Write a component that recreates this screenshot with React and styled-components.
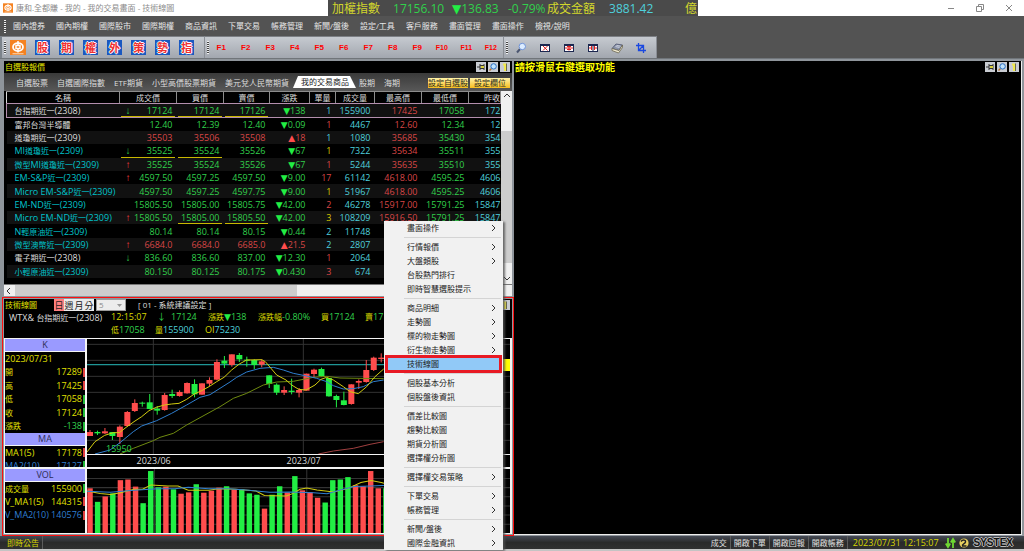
import React from "react";
import styled, { createGlobalStyle, css } from "styled-components";

const c = {
  green: "#31d04c",
  red: "#d84646",
  cyan: "#4fd0dc",
  name: "#00c4cc",
  white: "#dcdcdc",
  yellow: "#d8d800",
  blue: "#2f7fd0",
  up: "#ff4d4d",
  down: "#22ee44",
};

const Global = createGlobalStyle`
  * { box-sizing: border-box; }
  body {
    margin: 0;
    background: #535353;
    font-family: "Open Sans", "Noto Sans CJK TC", sans-serif;
    font-size: 8px;
    line-height: 12px;
    color: #dcdcdc;
  }
  button, select {
    font: inherit;
    color: inherit;
    margin: 0;
    padding: 0;
    border: 0;
    background: none;
    white-space: nowrap;
  }
`;

const Page = styled.div`
  position: relative;
  display: flex;
  flex-direction: column;
  min-height: 100vh;
  overflow: hidden;
`;

/* ---------- window title ---------- */
const TitleBar = styled.header`
  display: grid;
  grid-template-columns: 328px auto 1fr;
  height: 16px;
  background: #fff;
`;
const WindowTitle = styled.h1`
  display: flex;
  align-items: center;
  gap: 3px;
  margin: 0;
  padding-left: 3px;
  font-size: 8px;
  font-weight: 400;
  color: #8c8c8c;
`;
const Ticker = styled.div`
  display: flex;
  align-items: center;
  width: 370px;
  padding: 0 1px 0 4px;
  background: #4a4a4a;
  font-size: 12px;
  line-height: 15px;
  color: ${c.green};
  white-space: nowrap;
`;
const TickerLabel = styled.span`
  color: #d2d62c;
`;
const TickerValue = styled.span`
  width: ${(p) => p.$w}px;
  padding-left: ${(p) => p.$pad || 0}px;
  color: ${(p) => p.$color || c.green};
`;
const Tri = styled.span`
  font-family: "DejaVu Sans", sans-serif;
  line-height: 1px;
  color: ${(p) => (p.$up ? c.up : c.down)};
`;
const WindowButtons = styled.div`
  display: flex;
  justify-content: flex-end;
  align-items: center;
  padding-right: 9px;
  gap: 17px;
`;
const WinBtn = styled.button`
  width: 12px;
  height: 14px;
  svg { display: block; }
`;

/* ---------- menu bar and tool bar ---------- */
const MenuBar = styled.nav`
  display: flex;
  align-items: center;
  gap: 11px;
  height: 20px;
  padding-left: 4px;
  background: #535353;
  color: #e6e6e6;
`;
const Grip = styled.i`
  width: 2px;
  height: 13px;
  margin-right: ${(p) => p.$gap || 0}px;
  background: repeating-linear-gradient(#f2f2f2 0 1px, #444 1px 2px);
`;
const MenuGrip = styled(Grip)`
  margin-right: -4px;
`;
const ToolBar = styled.div`
  display: flex;
  height: 22px;
  border-left: 2px solid #7c838b;
  background: #535353;
`;
const ToolGroup = styled.div`
  display: flex;
  align-items: center;
  width: ${(p) => p.$w}px;
  padding-left: 2px;
  border-top: 1px solid #7c7f84;
  border-right: 1px solid #8a8e95;
  background: linear-gradient(#c6cad0, #a2a7af);
`;
const Tile = styled.button`
  width: 15px;
  height: 15px;
  margin-right: 9px;
  background: #1a58c0;
  color: #f03030;
  font-weight: 700;
  font-size: 11px;
  line-height: 14px;
  text-shadow: 1px 0 #fff, -1px 0 #fff, 0 1px #fff, 0 -1px #fff;
  display: flex;
  justify-content: center;
  align-items: center;
  overflow: hidden;
`;
const LogoBtn = styled.button`
  width: 16px;
  height: 15px;
  margin-right: 9px;
  svg { display: block; }
`;
const FKey = styled.button`
  flex: 1;
  font-family: "Liberation Sans", sans-serif;
  font-weight: 700;
  font-size: ${(p) => (p.$small ? 7 : 8)}px;
  color: #f00;
`;
const IconTool = styled.button`
  width: 24px;
  height: 16px;
  display: flex;
  align-items: center;
  justify-content: center;
`;

/* ---------- work area ---------- */
const Work = styled.main`
  flex: 1;
  display: grid;
  grid-template-columns: 128fr 127fr;
  padding: 2px 2px 0 2px;
  border-top: 1px solid #70757a;
  background: #8f959b;
`;
const LeftCol = styled.div`
  display: flex;
  flex-direction: column;
  min-width: 0;
`;
const Quotes = styled.section`
  display: flex;
  flex-direction: column;
  margin: 0 2px 1px;
  background: #000;
`;
const PanelHead = styled.div`
  display: flex;
  align-items: center;
  height: 12px;
`;
const PanelTitle = styled.h2`
  margin: 0;
  padding-left: 1px;
  font-size: ${(p) => (p.$big ? 10 : 8)}px;
  font-weight: ${(p) => (p.$big ? 700 : 400)};
  color: ${(p) => (p.$big ? "#ffff00" : "#e6e600")};
`;
const HeadIcons = styled.div`
  display: flex;
  gap: 2px;
  margin-left: auto;
  padding-right: 2px;
`;
const HeadBtn = styled.button`
  width: 10px;
  height: 10px;
  background: #c9ccd2;
  svg { display: block; }
`;

const Tabs = styled.div`
  display: flex;
  align-items: flex-end;
  height: 18px;
  padding-left: 7px;
  background: linear-gradient(#3a3a3a, #585858);
`;
const Tab = styled.button`
  height: 16px;
  padding: 0 4px 0 5px;
  color: #dedede;
  ${(p) =>
    p.$active &&
    css`
      height: 12px;
      margin: 0 -2px 3px 0;
      padding: 0 7px 0 8px;
      background: #fff;
      color: #222;
      clip-path: polygon(5px 0, calc(100% - 6px) 0, 100% 100%, 0 100%);
    `}
`;
const GoldButtons = styled.div`
  display: flex;
  gap: 2px;
  margin-left: auto;
  padding: 0 2px 3px 0;
`;
const GoldBtn = styled.button`
  width: 40px;
  height: 10px;
  line-height: 10px;
  background: linear-gradient(#fff3a8, #f7bd1e);
  color: #2b2b20;
  overflow: hidden;
  display: flex;
  justify-content: center;
`;

const Sheet = styled.div`
  display: grid;
  grid-template-columns: 1fr 11px;
  height: 193px;
  padding-left: 2px;
`;
const SheetClip = styled.div`
  overflow: hidden;
`;
const Table = styled.table`
  width: 100%;
  height: 187px;
  table-layout: fixed;
  border-collapse: collapse;
`;
const Col = styled.col`
  width: ${(p) => (p.$w ? p.$w + "px" : "auto")};
`;
const Th = styled.th`
  height: 12px;
  padding: 0;
  line-height: 11px;
  font-weight: 400;
  border: 1px solid #8c8c8c;
  border-left-color: #d8d8d8;
  color: #dcdcdc;
  white-space: nowrap;
  overflow: hidden;
  text-align: ${(p) => (p.$end ? "right" : "center")};
`;
const Row = styled.tr`
  background: ${(p) => (p.$odd ? "#111" : "#000")};
  outline: ${(p) => (p.$sel ? "1px solid #b48fae" : "none")};
  outline-offset: 0;
`;
const NameCell = styled.th`
  padding: 0 0 0 8px;
  line-height: 11px;
  font-weight: 400;
  text-align: left;
  white-space: nowrap;
  overflow: hidden;
  color: ${(p) => p.$color};
`;
const Code = styled.span`
  font-size: 9px;
  line-height: 1px;
`;
const Td = styled.td`
  padding: 0 ${(p) => (p.$last ? 0 : 4)}px 0 0;
  font-size: 9px;
  line-height: 11px;
  text-align: right;
  white-space: nowrap;
  overflow: hidden;
  color: ${(p) => p.$color};
  background: ${(p) =>
    p.$mark
      ? "linear-gradient(#c8b800, #c8b800) 1px 100% / calc(100% - 3px) 1px no-repeat"
      : "none"};
`;
const Arrow = styled.span`
  float: left;
  padding-left: 6px;
  font-family: "Liberation Sans", sans-serif;
  font-size: 10px;
  color: ${(p) => (p.$up ? "#ff4040" : c.green)};
`;
const VScroll = styled.div`
  display: flex;
  flex-direction: column;
  justify-content: space-between;
  align-items: center;
  background: linear-gradient(#cdcdcd, #cdcdcd) 0 40px / 100% 132px no-repeat #f0f0f0;
  svg { display: block; }
`;
const HScroll = styled.div`
  display: flex;
  align-items: center;
  height: 12px;
  border-top: 1px solid #777;
  background: linear-gradient(#cdcdcd, #cdcdcd) 11px 0 / 282px 100% no-repeat #f0f0f0;
`;

/* ---------- chart panel ---------- */
const ChartPanel = styled.section`
  flex: 1;
  display: flex;
  flex-direction: column;
  border: 1px solid #ff1010;
  box-shadow: inset 0 0 0 1px #8f959b;
  padding: 1px;
  background: #000;
`;
const Periods = styled.div`
  display: flex;
  align-items: center;
  margin-left: 17px;
`;
const Period = styled.button`
  width: 10px;
  height: 12px;
  background: ${(p) => (p.$on ? "#ff8080" : "#ececec")};
  color: #222;
  font-size: 9px;
  line-height: 11px;
`;
const SelectBox = styled.span`
  display: grid;
  grid-template-columns: 1fr 9px;
  align-items: center;
  width: 30px;
  height: 12px;
  margin-left: 2px;
  background: #ececec;
  border: 1px solid #9a9a9a;
  svg { grid-area: 1 / 2; pointer-events: none; }
`;
const PeriodSelect = styled.select`
  grid-area: 1 / 1 / 2 / 3;
  appearance: none;
  height: 10px;
  padding-left: 2px;
  color: #8a8a8a;
  font-size: 8px;
  line-height: 10px;
`;
const Preset = styled.span`
  margin-left: 12px;
  font-size: 8px;
`;
const Info = styled.div`
  display: grid;
  grid-template-columns: 102px 1fr;
  height: 27px;
  padding-left: 5px;
  line-height: 13px;
  white-space: nowrap;
  overflow: hidden;
`;
const InfoLine = styled.div`
  display: grid;
  grid-template-columns: ${(p) => p.$cols};
  height: 13px;
  font-size: 9px;
  line-height: 11px;
`;
const Fig = styled.span`
  color: ${(p) => p.$color || c.green};
`;
const Lab = styled.span`
  font-size: 8px;
  color: ${(p) => p.$color || c.yellow};
`;
const Body = styled.div`
  flex: 1;
  display: grid;
  grid-template-columns: 80px 1fr;
  grid-template-rows: 128px 1fr;
  gap: 2px;
  padding: 1px 2px 1px 1px;
  background: #f4f4f4;
`;
const Side = styled.div`
  display: flex;
  flex-direction: column;
  min-height: 0;
  overflow: hidden;
  background: #000;
`;
const SideHead = styled.h3`
  flex: none;
  margin: 0;
  height: 13px;
  border-bottom: 1px solid #f4f4f4;
  background: #9a9aff;
  color: #2c2c55;
  font-size: 9px;
  font-weight: 400;
  line-height: 12px;
  text-align: center;
`;
const SideRows = styled.div`
  flex: none;
  display: grid;
  grid-auto-rows: 1fr;
  height: ${(p) => p.$h}px;
`;
const SideRow = styled.div`
  display: grid;
  grid-template-columns: auto 1fr 3px;
  align-items: center;
  font-size: ${(p) => (p.$latin ? 9 : 8)}px;
  line-height: 12px;
  white-space: nowrap;
  color: ${(p) => p.$color || "#e0e000"};
`;
const SideVal = styled.span`
  text-align: right;
  font-size: 9px;
  color: ${(p) => p.$color || "inherit"};
`;
const Mark = styled.i`
  justify-self: end;
  width: 2px;
  height: 9px;
  background: ${(p) => (p.$up ? "#e04040" : "#20b838")};
`;
const Plots = styled.div`
  display: grid;
  grid-template-rows: ${(p) => p.$rows};
  gap: 1px;
  min-width: 0;
  min-height: 0;
  overflow: hidden;
  svg { display: block; width: 100%; height: 100%; background: #000; }
`;

/* ---------- right panel and status bar ---------- */
const RightPanel = styled.section`
  border-right: 1px solid #eee;
  border-bottom: 1px solid #eee;
  background: #000;
  margin-bottom: 1px;
`;
const Status = styled.footer`
  display: flex;
  align-items: center;
  height: 15px;
  padding: 0 6px 0 4px;
  background: linear-gradient(#454a55, #2a2a2a 50%, #303030);
  border-bottom: 2px solid #c4c4c4;
`;
const StatusBtn = styled.button`
  height: 13px;
  padding: 0 3px;
  border-right: 1px solid #5c5c5c;
  color: ${(p) => (p.$gold ? "#d8d800" : "#e0e0e0")};
`;
const StatusRight = styled.div`
  display: flex;
  align-items: center;
  margin-left: auto;
`;
const Clock = styled.time`
  padding: 0 6px 0 5px;
  font-size: 9px;
  color: #d8d800;
`;
const Brand = styled.span`
  padding: 0 5px;
  font-family: "Liberation Sans", sans-serif;
  font-weight: 700;
  font-size: 10px;
  color: #111;
  text-shadow: 1px 0 #bbb, -1px 0 #bbb, 0 1px #bbb, 0 -1px #bbb;
`;

/* ---------- context menu ---------- */
const Popup = styled.div`
  position: absolute;
  left: 384px;
  top: 221px;
  width: 119px;
  background: #f1f1f1;
  box-shadow: 2px 1px 2px rgba(80, 80, 80, 0.8);
  color: #1a1a1a;
`;
const PopItem = styled.button`
  display: flex;
  align-items: center;
  justify-content: space-between;
  width: 113px;
  height: 14px;
  margin: 0 3px;
  padding: 0 4px 0 20px;
  ${(p) =>
    p.$on &&
    css`
      background: #91c9f7;
      outline: 3px solid #e81a24;
      outline-offset: -1px;
    `}
`;
const Sep = styled.hr`
  height: 1px;
  margin: 2px 2px 2px 20px;
  border: 0;
  background: #d4d4d4;
`;

/* ---------- drawings ---------- */
const Logo = ({ w, h }) => (
  <svg width={w} height={h} viewBox="0 0 32 30">
    <rect width="32" height="30" fill="#f58220" />
    <ellipse cx="16" cy="14" rx="10" ry="8" fill="none" stroke="#fff" strokeWidth="3.5" />
    <path d="M16 2v8M16 18v7M12 11h8v6h-8z" stroke="#fff" strokeWidth="3" fill="#f58220" />
    <path d="M5 27.5h22" stroke="#fbd9b8" strokeWidth="2" />
  </svg>
);
const Pin = () => (
  <svg width="10" height="10" viewBox="0 0 10 10">
    <path d="M1 5h3M4 2v6M8 2v6M4 3.5h4M4 6.5h4" stroke="#333" fill="none" />
    <rect x="5" y="4" width="3" height="2" fill="#d8cf3a" />
  </svg>
);
const Lens = () => (
  <svg width="10" height="10" viewBox="0 0 10 10">
    <path d="M1.500 8.500l2-2" stroke="#b07030" strokeWidth="1.500" />
    <circle cx="5.600" cy="4.400" r="2.700" fill="#bfe3ff" stroke="#2a6fc4" />
  </svg>
);
const One = () => (
  <svg width="10" height="10" viewBox="0 0 10 10">
    <path d="M3 2.500h2V9" stroke="#f0e850" strokeWidth="2" fill="none" />
    <path d="M6.500 1.500v7.500" stroke="#6a6a50" />
  </svg>
);
const HeadButtons = () => (
  <HeadIcons>
    <HeadBtn aria-label="pin"><Pin /></HeadBtn>
    <HeadBtn aria-label="search"><Lens /></HeadBtn>
    <HeadBtn aria-label="one"><One /></HeadBtn>
  </HeadIcons>
);
const BigLens = () => (
  <svg width="12" height="12" viewBox="0 0 12 12">
    <path d="M2 10.500l3-3.500" stroke="#4a5570" strokeWidth="2" />
    <circle cx="7.300" cy="4.500" r="3.200" fill="#dcecff" stroke="#6f93d8" />
  </svg>
);
const WindowBox = ({ children }) => (
  <svg width="12" height="12" viewBox="0 0 12 12">
    <rect x="1.500" y="2.500" width="9" height="7" fill="#fff" stroke="#1c2750" />
    <path d="M1 3h10" stroke="#1c2750" strokeWidth="2" />
    {children}
  </svg>
);
const Book = () => (
  <svg width="13" height="12" viewBox="0 0 13 12">
    <path d="M1 6.500L5 2l6.500 1L8 8.500z" fill="#8a93a8" stroke="#4a516c" strokeWidth=".8" />
    <path d="M1 6.500v2L7.500 11l4-5.500V3L8 8.500z" fill="#efe9cf" stroke="#6b6650" strokeWidth=".8" />
    <path d="M4.500 4.500l4 1M5.500 3.400l4 .8" stroke="#d8dce8" strokeWidth=".8" />
  </svg>
);
const Crop = () => (
  <svg width="12" height="12" viewBox="0 0 12 12">
    <path d="M3.500 1v7.500H11M1 3.500h7.500V11M3.500 8.500l5-5" stroke="#1a48e0" strokeWidth="1.300" fill="none" />
  </svg>
);
const Chevron = ({ d = "M1 1l3 3-3 3", w = 5, h = 8 }) => (
  <svg width={w} height={h} viewBox={`0 0 ${w} ${h}`}>
    <path d={d} stroke="#333" fill="none" />
  </svg>
);

/* ---------- data ---------- */
const menus = ["國內證券", "國內期權", "國際股市", "國際期權", "商品資訊", "下單交易", "帳務管理", "新聞/盤後", "設定/工具", "客戶服務", "畫面管理", "畫面操作", "檢視/說明"];
const tabs = ["自選股票", "自選國際指數", "ETF期貨", "小型高價股票期貨", "美元兌人民幣期貨", "我的交易商品", "股期", "海期"];
const cols = [
  ["名稱", 113], ["成交價", 57], ["買價", 47], ["賣價", 46], ["漲跌", 40],
  ["單量", 26], ["成交量", 39], ["最高價", 47], ["最低價", 47], ["昨收", 0],
];
const G = c.green, R = c.red, C = c.cyan, Y = "#d8c800";
// name, name colour, arrow, price colour, prices, change, lot, lot colour, volume, high, low, previous, underlined columns
const rows = [
  ["台指期近一(2308)", c.white, -1, G, "17124", "17124", "17126", "138", "1", C, "155900", "17425", "17058", "172", "012"],
  ["富邦台灣半導體", c.white, 0, G, "12.40", "12.39", "12.40", "0.09", "1", R, "4467", "12.60", "12.34", "12", ""],
  ["道瓊期近一(2309)", c.white, 0, R, "35503", "35506", "35508", "18", "1", C, "1080", "35685", "35430", "354", ""],
  ["MI道瓊近一(2309)", c.name, -1, G, "35525", "35524", "35526", "67", "1", Y, "7322", "35634", "35511", "355", "01"],
  ["微型MI道瓊近一(2309)", c.name, 1, G, "35525", "35524", "35526", "67", "1", R, "5244", "35635", "35510", "355", ""],
  ["EM-S&P近一(2309)", c.name, 1, G, "4597.50", "4597.25", "4597.50", "9.00", "17", R, "61142", "4618.00", "4595.25", "4606", ""],
  ["Micro EM-S&P近一(2309)", c.name, 0, G, "4597.50", "4597.25", "4597.75", "9.00", "1", Y, "51967", "4618.00", "4595.25", "4606", ""],
  ["EM-ND近一(2309)", c.name, 0, G, "15805.50", "15805.00", "15805.75", "42.00", "2", R, "46278", "15917.00", "15791.25", "15847", ""],
  ["Micro EM-ND近一(2309)", c.name, 1, G, "15805.50", "15805.00", "15805.50", "42.00", "3", Y, "108209", "15916.50", "15791.25", "15847", "12"],
  ["N輕原油近一(2309)", c.name, 0, G, "80.14", "80.14", "80.15", "0.44", "2", C, "11748", "", "", "", ""],
  ["微型澳幣近一(2309)", c.name, 1, R, "6684.0", "6684.0", "6685.0", "21.5", "2", C, "2807", "", "", "", ""],
  ["電子期近一(2308)", c.white, -1, G, "836.60", "836.60", "837.00", "12.30", "1", R, "2064", "", "", "", ""],
  ["小輕原油近一(2309)", c.name, 0, G, "80.150", "80.125", "80.175", "0.430", "3", R, "674", "", "", "", ""],
];
const popup = [
  ["畫面操作", 1], null, ["行情報價", 1], ["大盤類股", 1], ["台股熱門排行"], ["即時智慧選股提示"], null,
  ["商品明細", 1], ["走勢圖", 1], ["標的物走勢圖", 1], ["衍生物走勢圖", 1], ["技術線圖", 0, 1], null,
  ["個股基本分析"], ["個股盤後資訊"], null, ["價差比較圖"], ["趨勢比較圖"], ["期貨分析圖"], ["選擇權分析圖"], null,
  ["選擇權交易策略", 1], null, ["下單交易", 1], ["帳務管理", 1], null, ["新聞/盤後", 1], ["國際金融資訊", 1],
];
// direction, body top, body bottom, wick top, wick bottom, volume top
const candles = [
  [1, 426, 438, 420, 438, 597], [0, 426, 430, 422, 435, 637], [1, 424, 430, 414, 432, 621], [0, 426, 438, 426, 450, 612],
  [1, 410, 441, 406, 462, 573], [1, 366, 408, 363, 410, 571], [1, 339, 363, 328, 366, 592], [0, 338, 341, 335, 350, 641],
  [0, 337, 357, 312, 358, 546], [0, 356, 362, 348, 374, 594], [1, 315, 360, 309, 362, 592], [0, 312, 318, 299, 324, 600],
  [1, 306, 318, 301, 320, 613], [1, 279, 310, 277, 311, 609], [0, 282, 313, 268, 322, 585], [1, 280, 314, 280, 314, 610],
  [1, 270, 281, 262, 288, 604], [1, 216, 269, 208, 271, 595], [0, 212, 221, 198, 234, 591], [1, 193, 225, 193, 230, 601],
  [0, 195, 208, 189, 216, 600], [0, 209, 212, 200, 230, 612], [0, 210, 225, 208, 237, 616], [1, 214, 224, 208, 232, 657],
  [0, 256, 282, 256, 294, 616], [0, 284, 308, 280, 315, 591], [1, 300, 308, 289, 315, 609], [0, 302, 306, 266, 313, 561],
  [1, 300, 308, 294, 322, 603], [1, 251, 302, 251, 302, 609], [1, 239, 252, 236, 262, 625], [0, 237, 258, 233, 260, 639],
  [0, 264, 319, 264, 320, 573], [0, 318, 330, 314, 352, 571], [0, 331, 345, 305, 346, 564], [1, 283, 342, 283, 344, 588],
  [1, 273, 278, 268, 297, 591], [1, 240, 276, 210, 278, 546], [1, 203, 240, 200, 243, 597], [1, 203, 207, 190, 217, 597, 1],
];
const cx = (i) => 270 + i * 22.4;
const fill = (up) => (up ? "#ff4d4d" : "#22ee44");

const Line = ({ points, color }) => (
  <polyline points={points} fill="none" stroke={color} strokeWidth="3" />
);
const Grid = ({ ys, top, bottom }) => (
  <g stroke="#333" strokeWidth="3">
    {ys.map((y) => <path key={y} d={`M261 ${y}H1530`} />)}
    <path d={`M460 ${top}V${bottom}M910 ${top}V${bottom}M1380 ${top}V${bottom}`} />
  </g>
);

const PriceChart = () => (
  <svg viewBox="261 147 1269 345" preserveAspectRatio="xMinYMin slice">
    <Grid ys={[163, 211, 259, 307, 355, 403, 451]} top={147} bottom={492} />
    <path d="M261 224H1530" stroke="#1f9696" strokeWidth="4" />
    {candles.map(([up, t, b, wt, wb], i) => (
      <g key={i} fill={fill(up)}>
        <rect x={cx(i) - 1.5} y={wt} width="3" height={wb - wt} />
        <rect x={cx(i) - 9} y={t} width="18" height={b - t} />
      </g>
    ))}
    <Line color="#6f8a10" points="360,492 400,475 460,452 480,442 520,430 560,405 600,383 660,350 700,325 740,310 790,285 830,276 880,274 940,262 980,259 1020,264 1080,265 1151,266" />
    <Line color="#2f7fd0" points="285,492 330,480 360,458 400,425 425,408 470,392 515,370 560,345 600,322 630,314 660,295 690,276 710,262 740,246 780,235 820,232 850,240 880,250 920,258 950,265 980,275 1000,287 1030,297 1060,296 1090,290 1120,275 1151,270" />
    <Line color="#d2cc10" points="261,486 285,455 314,436 340,428 358,428 381,410 402,395 425,380 447,362 469,352 493,345 515,342 537,340 560,328 583,312 605,302 627,290 650,275 672,262 695,240 718,222 740,210 785,209 796,215 830,255 858,270 875,285 896,298 918,300 945,285 963,268 980,262 1000,270 1030,290 1050,305 1075,311 1100,290 1125,260 1151,237" />
    <Line color="#a04040" points="955,492 1000,483 1060,475 1110,463 1151,455" />
    <text x="318" y="487" fontSize="27" fill={c.green}>15950</text>
    <rect x="1509" y="207" width="21" height="36" fill="#ff0" />
  </svg>
);
const Axis = () => (
  <svg viewBox="261 495 1269 36" preserveAspectRatio="xMinYMin slice">
    <g fontSize="27" fill="#dcdcdc" textAnchor="middle">
      <text x="461" y="523">2023/06</text>
      <text x="911" y="523">2023/07</text>
    </g>
  </svg>
);
const VolumeChart = () => (
  <svg viewBox="261 540 1269 189" preserveAspectRatio="xMinYMax slice">
    <Grid ys={[568, 595, 622, 649, 676, 703]} top={540} bottom={729} />
    {candles.map(([up, , , , , v, volDown], i) => (
      <rect key={i} x={cx(i) - 8} y={v} width="16" height={729 - v} fill={fill(volDown ? 0 : up)} />
    ))}
    <Line color="#d2cc10" points="261,605 300,612 330,615 360,610 400,600 425,600 450,587 500,590 530,590 560,603 620,603 650,598 700,600 760,605 785,618 850,620 870,612 890,600 910,596 940,602 990,608 1030,598 1070,580 1100,574 1130,580 1151,586" />
    <Line color="#2f7fd0" points="261,606 330,609 400,603 470,598 520,598 560,594 620,598 680,598 740,603 800,609 860,608 930,610 970,613 1010,602 1050,592 1100,590 1151,588" />
  </svg>
);

const nameParts = (s) =>
  s.split(/([\x20-\x7e]+)/).map((t, i) => (i % 2 ? <Code key={i}>{t}</Code> : t));

const QuoteRow = ({ r, i }) => {
  const [name, nameColor, arrow, color, p1, p2, p3, chg, lot, lotColor, vol, hi, lo, prev, marks] = r;
  const up = color === R;
  return (
    <Row $odd={i % 2 === 0} $sel={i === 0}>
      <NameCell scope="row" $color={nameColor}>{nameParts(name)}</NameCell>
      {[p1, p2, p3].map((p, k) => (
        <Td key={k} $color={color} $mark={marks.includes(k)}>
          {k === 0 && arrow !== 0 && <Arrow $up={arrow > 0}>{arrow > 0 ? "↑" : "↓"}</Arrow>}
          {p}
        </Td>
      ))}
      <Td $color={color}><Tri $up={up}>{up ? "▲" : "▼"}</Tri>{chg}</Td>
      <Td $color={lotColor}>{lot}</Td>
      <Td $color={C}>{vol}</Td>
      <Td $color={R}>{hi}</Td>
      <Td $color={G}>{lo}</Td>
      <Td $color={C} $last>{prev}</Td>
    </Row>
  );
};

const SideItem = ({ label, value, color, valueColor, up, latin }) => (
  <SideRow $color={color} $latin={latin}>
    <span>{label}</span>
    <SideVal $color={valueColor}>{value}</SideVal>
    <Mark $up={up} />
  </SideRow>
);

export default function App() {
  return (
    <Page>
      <Global />
      <TitleBar>
        <WindowTitle><Logo w={10} h={10} />康和.全都賺 - 我的 - 我的交易畫面 - 技術線圖</WindowTitle>
        <Ticker>
          <TickerLabel>加權指數</TickerLabel>
          <TickerValue $w={72} $pad={13}>17156.10</TickerValue>
          <TickerValue $w={56}><Tri>▼</Tri>136.83</TickerValue>
          <TickerValue $w={39}>-0.79%</TickerValue>
          <TickerLabel>成交金額</TickerLabel>
          <TickerValue $w={90} $pad={14} $color={c.cyan}>3881.42</TickerValue>
          <TickerLabel>億</TickerLabel>
        </Ticker>
        <WindowButtons>
          <WinBtn aria-label="minimize"><svg width="12" height="14" viewBox="0 0 12 14"><path d="M3 7.500h6" stroke="#888" /></svg></WinBtn>
          <WinBtn aria-label="restore"><svg width="12" height="14" viewBox="0 0 12 14"><path d="M2.500 5.500h5v5h-5zM4.500 5V3.500h5v5H8" stroke="#888" fill="none" /></svg></WinBtn>
          <WinBtn aria-label="close"><svg width="12" height="14" viewBox="0 0 12 14"><path d="M3 4l6 6M9 4l-6 6" stroke="#888" /></svg></WinBtn>
        </WindowButtons>
      </TitleBar>

      <MenuBar>
        <MenuGrip />
        {menus.map((m) => <button key={m}>{m}</button>)}
      </MenuBar>

      <ToolBar>
        <ToolGroup $w={203}>
          <Grip $gap={4} />
          <LogoBtn aria-label="home"><Logo w={16} h={15} /></LogoBtn>
          {[..."股期權外策勢指"].map((t) => <Tile key={t}>{t}</Tile>)}
        </ToolGroup>
        <ToolGroup $w={299}>
          <Grip />
          {Array.from({ length: 12 }, (_, i) => <FKey key={i} $small={i > 8}>F{i + 1}</FKey>)}
        </ToolGroup>
        <ToolGroup $w={153}>
          <Grip $gap={1} />
          <IconTool aria-label="find"><BigLens /></IconTool>
          <IconTool aria-label="close all"><WindowBox><path d="M4 4l4.500 4.500M8.500 4L4 8.500" stroke="#e02020" /></WindowBox></IconTool>
          <IconTool aria-label="split rows"><WindowBox><path d="M2 6h8M6 3.500v5M4 4.500h4M4 7.500h4" stroke="#e02020" /></WindowBox></IconTool>
          <IconTool aria-label="split columns"><WindowBox><path d="M6 3v7" stroke="#1c2750" /><path d="M4.500 4v4M7.500 4v4M2 6h3M7 6h3" stroke="#e02020" /></WindowBox></IconTool>
          <IconTool aria-label="notes"><Book /></IconTool>
          <IconTool aria-label="crop"><Crop /></IconTool>
        </ToolGroup>
      </ToolBar>

      <Work>
        <LeftCol>
          <Quotes>
            <PanelHead>
              <PanelTitle>自選股報價</PanelTitle>
              <HeadButtons />
            </PanelHead>
            <Tabs>
              {tabs.map((t) => <Tab key={t} $active={t === "我的交易商品"}>{t}</Tab>)}
              <GoldButtons>
                <GoldBtn>設定自選股</GoldBtn>
                <GoldBtn>設定欄位</GoldBtn>
              </GoldButtons>
            </Tabs>
            <Sheet>
              <SheetClip>
                <Table>
                  <colgroup>{cols.map(([n, w]) => <Col key={n} $w={w} />)}</colgroup>
                  <thead><tr>{cols.map(([n, w]) => <Th key={n} scope="col" $end={!w}>{n}</Th>)}</tr></thead>
                  <tbody>{rows.map((r, i) => <QuoteRow key={r[0]} r={r} i={i} />)}</tbody>
                </Table>
              </SheetClip>
              <VScroll>
                <Chevron d="M1 6l3-3 3 3" w={8} h={10} />
                <Chevron d="M1 3l3 3 3-3" w={8} h={10} />
              </VScroll>
            </Sheet>
            <HScroll><Chevron d="M6 2L3 5l3 3" w={10} h={10} /></HScroll>
          </Quotes>

          <ChartPanel>
            <PanelHead>
              <PanelTitle>技術線圖</PanelTitle>
              <Periods>
                {["日", "週", "月", "分"].map((p, i) => <Period key={p} $on={i === 0}>{p}</Period>)}
                <SelectBox>
                  <PeriodSelect aria-label="分" defaultValue="5"><option>5</option></PeriodSelect>
                  <svg width="7" height="6" viewBox="0 0 7 6"><path d="M1 2h5L3.500 5z" fill="#999" /></svg>
                </SelectBox>
              </Periods>
              <Preset>[ 01 - 系統建議設定 ]</Preset>
              <HeadButtons />
            </PanelHead>
            <Info>
              <div>{nameParts("WTX& 台指期近一(2308)")}</div>
              <div>
                <InfoLine $cols="46px 14px 37px 50px 63px 44px 44px">
                  <Fig $color={c.yellow}>12:15:07</Fig>
                  <Fig>↓</Fig>
                  <Fig>17124</Fig>
                  <Fig><Lab>漲跌</Lab><Tri>▼</Tri>138</Fig>
                  <Fig><Lab>漲跌幅</Lab>-0.80%</Fig>
                  <Fig><Lab>買</Lab>17124</Fig>
                  <Fig><Lab>賣</Lab>17126</Fig>
                </InfoLine>
                <InfoLine $cols="44px 50px 50px">
                  <Fig><Lab>低</Lab>17058</Fig>
                  <Fig $color={c.cyan}><Lab>量</Lab>155900</Fig>
                  <Fig $color={c.cyan}><Fig $color={c.yellow}>OI</Fig>75230</Fig>
                </InfoLine>
              </div>
            </Info>
            <Body>
              <Side>
                <SideHead>K</SideHead>
                <SideRows $h={81}>
                  <SideRow $latin>2023/07/31</SideRow>
                  <SideItem label="開" value="17289" up />
                  <SideItem label="高" value="17425" up />
                  <SideItem label="低" value="17058" />
                  <SideItem label="收" value="17124" />
                  <SideItem label="漲跌" value="-138" valueColor={c.green} />
                </SideRows>
                <SideHead>MA</SideHead>
                <SideRows $h={26}>
                  <SideItem latin label="MA1(5)" value="17178" up />
                  <SideItem latin label="MA2(10)" value="17127" color={c.blue} />
                </SideRows>
              </Side>
              <Plots $rows="115px 12px">
                <PriceChart />
                <Axis />
              </Plots>
              <Side>
                <SideHead>VOL</SideHead>
                <SideRows $h={40}>
                  <SideItem label="成交量" value="155900" />
                  <SideItem latin label="V_MA1(5)" value="144315" up />
                  <SideItem latin label="V_MA2(10)" value="140576" color={c.blue} up />
                </SideRows>
              </Side>
              <Plots $rows="minmax(0, 1fr)">
                <VolumeChart />
              </Plots>
            </Body>
          </ChartPanel>
        </LeftCol>

        <RightPanel>
          <PanelHead>
            <PanelTitle $big>請按滑鼠右鍵選取功能</PanelTitle>
            <HeadButtons />
          </PanelHead>
        </RightPanel>
      </Work>

      <Status>
        <StatusBtn $gold>即時公告</StatusBtn>
        <StatusRight>
          <StatusBtn>成交</StatusBtn>
          <StatusBtn>開啟下單</StatusBtn>
          <StatusBtn>開啟回報</StatusBtn>
          <StatusBtn>開啟帳務</StatusBtn>
          <Clock>2023/07/31 12:15:07</Clock>
          <svg width="24" height="12" viewBox="0 0 24 12">
            <path d="M3 1v8M.8 6.500L3 10l2.200-3.500M8 11V3M5.800 5.500L8 2l2.200 3.500" stroke="#6fd832" strokeWidth="1.800" fill="none" />
            <circle cx="19" cy="6" r="4.600" fill="#e8d060" />
            <path d="M16 4.500c2-2.500 5-1.500 4.500.5s-4 2-3 4h4" stroke="#222" strokeWidth="1.400" fill="none" />
          </svg>
          <Brand>SYSTEX</Brand>
        </StatusRight>
      </Status>

      <Popup role="menu">
        {popup.map((p, i) =>
          p ? (
            <PopItem key={i} role="menuitem" $on={p[2]}>
              {p[0]}
              {p[1] ? <Chevron /> : null}
            </PopItem>
          ) : (
            <Sep key={i} />
          )
        )}
      </Popup>
    </Page>
  );
}
